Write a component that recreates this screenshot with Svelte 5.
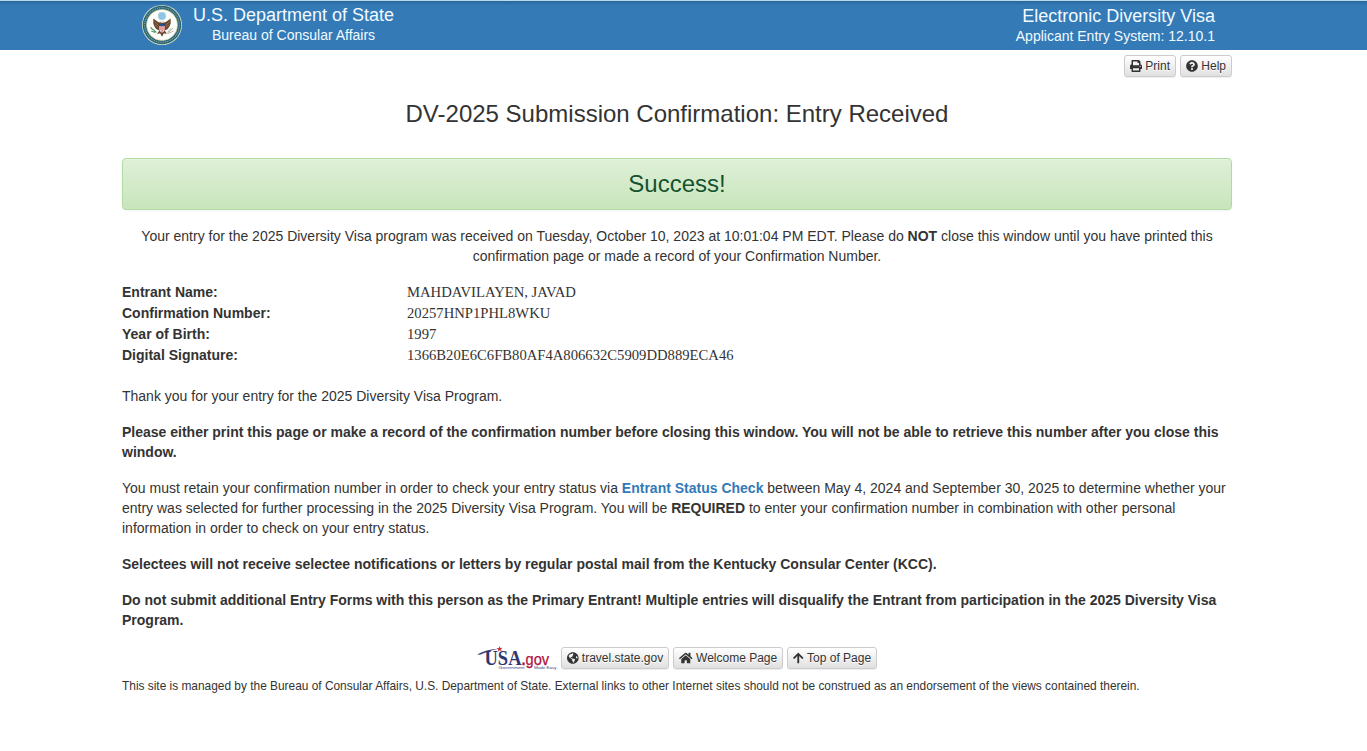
<script>
  const icons = {
    print: { w: 512, d: 'M448 192V77.25c0-8.49-3.37-16.62-9.37-22.63L393.37 9.37c-6-6-14.14-9.37-22.63-9.37H96C78.33 0 64 14.33 64 32v160c-35.35 0-64 28.65-64 64v112c0 8.84 7.16 16 16 16h48v96c0 17.67 14.33 32 32 32h320c17.67 0 32-14.33 32-32v-96h48c8.84 0 16-7.16 16-16V256c0-35.35-28.65-64-64-64zm-64 256H128v-96h256v96zm0-224H128V64h192v48c0 8.84 7.16 16 16 16h48v96zm48 72c-13.25 0-24-10.75-24-24 0-13.26 10.75-24 24-24s24 10.74 24 24c0 13.25-10.75 24-24 24z' },
    help: { w: 512, d: 'M504 256c0 136.997-111.043 248-248 248S8 392.997 8 256C8 119.083 119.043 8 256 8s248 111.083 248 248zM262.655 90c-54.497 0-89.255 22.957-116.549 63.758-3.536 5.286-2.353 12.415 2.715 16.258l34.699 26.31c5.205 3.947 12.621 3.008 16.665-2.122 17.864-22.658 30.113-35.797 57.303-35.797 20.429 0 45.698 13.148 45.698 32.958 0 14.976-12.363 22.667-32.534 33.976C247.128 238.528 216 254.941 216 296v4c0 6.627 5.373 12 12 12h56c6.627 0 12-5.373 12-12v-1.333c0-28.462 83.186-29.647 83.186-106.667 0-58.002-60.165-102-116.531-102zM256 338c-25.365 0-46 20.635-46 46 0 25.364 20.635 46 46 46s46-20.636 46-46c0-25.365-20.635-46-46-46z' },
    globe: { w: 496, d: 'M248 8C111.03 8 0 119.03 0 256s111.03 248 248 248 248-111.03 248-248S384.97 8 248 8zm82.29 357.6c-3.9 3.88-7.99 7.95-11.31 11.28-2.99 3-5.1 6.7-6.17 10.71-1.51 5.66-2.73 11.38-4.77 16.87l-17.39 46.85c-13.76 3-28 4.69-42.65 4.69v-27.38c1.69-12.62-7.64-36.26-22.63-51.25-6-6-9.37-14.14-9.37-22.63v-32.01c0-11.64-6.27-22.34-16.46-27.97-14.37-7.95-34.81-19.06-48.81-26.11-11.48-5.78-22.1-13.14-31.65-21.75l-.8-.72a114.792 114.792 0 0 1-18.06-20.74c-9.38-13.77-24.66-36.42-34.59-51.14 20.47-45.5 57.36-82.04 103.2-101.89l24.01 12.01C203.48 89.74 216 82.01 216 70.11v-11.3c7.99-1.29 16.12-2.11 24.39-2.42l28.3 28.3c6.25 6.25 6.25 16.38 0 22.63L264 112l-10.34 10.34c-3.12 3.12-3.12 8.19 0 11.31l4.69 4.69c3.12 3.12 3.12 8.19 0 11.31l-8 8a8.008 8.008 0 0 1-5.66 2.34h-8.99c-2.08 0-4.08.81-5.58 2.27l-9.92 9.65a8.008 8.008 0 0 0-1.58 9.31l15.59 31.19c2.66 5.32-1.21 11.58-7.15 11.58h-5.64c-1.93 0-3.79-.7-5.24-1.96l-9.28-8.06a16.017 16.017 0 0 0-15.55-3.1l-31.17 10.39a11.95 11.95 0 0 0-8.17 11.34c0 4.53 2.56 8.66 6.61 10.69l11.08 5.54c9.41 4.71 19.79 7.16 30.31 7.16s22.59 27.29 32 32h66.75c8.49 0 16.62 3.37 22.63 9.37l13.69 13.69a30.503 30.503 0 0 1 8.93 21.57 46.536 46.536 0 0 1-13.72 32.98zM417 274.25c-5.79-1.45-10.84-5-14.15-9.97l-17.98-26.97a23.97 23.97 0 0 1 0-26.62l19.59-29.38c2.32-3.47 5.5-6.29 9.24-8.15l12.98-6.49C440.2 193.59 448 223.87 448 256c0 8.67-.74 17.16-1.82 25.54L417 274.25z' },
    home: { w: 576, d: 'M280.37 148.26L96 300.11V464a16 16 0 0 0 16 16l112.06-.29a16 16 0 0 0 15.92-16V368a16 16 0 0 1 16-16h64a16 16 0 0 1 16 16v95.64a16 16 0 0 0 16 16.05L464 480a16 16 0 0 0 16-16V300L295.67 148.26a12.19 12.19 0 0 0-15.3 0zM571.6 251.47L488 182.56V44.05a12 12 0 0 0-12-12h-56a12 12 0 0 0-12 12v72.61L318.47 43a48 48 0 0 0-61 0L4.34 251.47a12 12 0 0 0-1.6 16.9l25.5 31A12 12 0 0 0 45.15 301l235.22-193.74a12.19 12.19 0 0 1 15.3 0L530.9 301a12 12 0 0 0 16.9-1.6l25.5-31a12 12 0 0 0-1.7-16.93z' },
    up: { w: 448, d: 'M34.9 289.5l-22.2-22.2c-9.4-9.4-9.4-24.6 0-33.9L207 39c9.4-9.4 24.6-9.4 33.9 0l194.3 194.3c9.4 9.4 9.4 24.6 0 33.9L413 289.4c-9.5 9.5-25 9.3-34.3-.4L264 168.6V456c0 13.3-10.7 24-24 24h-32c-13.3 0-24-10.7-24-24V168.6L69.2 289.1c-9.3 9.8-24.8 10-34.3.4z' }
  };
  const entry = [
    ['Entrant Name:', 'MAHDAVILAYEN, JAVAD'],
    ['Confirmation Number:', '20257HNP1PHL8WKU'],
    ['Year of Birth:', '1997'],
    ['Digital Signature:', '1366B20E6C6FB80AF4A806632C5909DD889ECA46']
  ];
</script>

{#snippet button(name, label)}
  <button class="btn">
    <svg class="icon" viewBox="0 0 {icons[name].w} 512" width={icons[name].w * 12 / 512} height="12"><path d={icons[name].d} /></svg>
    <span>{label}</span>
  </button>
{/snippet}

<header>
  <div class="bar">
    <div class="brand">
      <svg class="seal" viewBox="0 0 40 40" width="40" height="40">
        <circle cx="20" cy="20" r="20" fill="#d5dfc0" />
        <circle cx="20" cy="20" r="19.2" fill="#2a6478" />
        <circle cx="20" cy="20" r="17.3" fill="none" stroke="#8fae9f" stroke-width="1.2" stroke-dasharray=".9 1" />
        <circle cx="20" cy="20" r="15.5" fill="#fefefb" stroke="#c9c78f" stroke-width=".6" />
        <circle cx="20" cy="11" r="3.9" fill="#8cc4e5" stroke="#b9d8dc" stroke-width=".8" />
        <path d="M18.2 17.6c-1.8-.2-4.3-1.6-6.6-4-1 4.300 .2 8.300 3 10.600l2.700 1.300-2.300 3.500 3.100-.7 1.900 3.500 1.900-3.500 3.100.7-2.300-3.500 2.700-1.300c2.800-2.300 4-6.300 3-10.600-2.300 2.400-4.800 3.800-6.600 4l-.3-1.600-2.800-.1z" fill="#68452f" />
        <path d="M12.600 16.500l3.600 4M13 19.800l3 2.400M27.400 16.500l-3.600 4M27 19.800l-3 2.400" stroke="#a97c45" stroke-width=".8" />
        <path d="M18 16.700l1.400-1.500 2 .3.500 2.300h-3z" fill="#f2edda" />
        <path d="M17 19h6v4.700c0 2-1.500 3.200-3 4-1.500-.8-3-2-3-4z" fill="#f6e8e2" />
        <path d="M18 21v4.400M20 21v6.400M22 21v4.400" stroke="#c5444a" stroke-width=".9" />
        <path d="M17 18.700h6v2.400h-6z" fill="#274f88" />
        <path d="M8.500 22.500c1 .2 1.300 1.700 2.700 2.200s1.400 2 3.300 2.600M9.300 26l3.600 1.400" fill="none" stroke="#5a9d70" stroke-width="1.300" />
        <path d="M25.500 28l5.700-4.800M26 28.500l5.500-2.400M25.500 27.500l3.700-4.500" stroke="#9b9997" stroke-width=".7" />
      </svg>
      <div class="agency"><div class="big">U.S. Department of State</div><div>Bureau of Consular Affairs</div></div>
    </div>
    <div class="system"><div class="big">Electronic Diversity Visa</div><div>Applicant Entry System: 12.10.1</div></div>
  </div>
</header>

<main>
  <div class="tools">{@render button('print', 'Print')}{@render button('help', 'Help')}</div>
  <h1>DV-2025 Submission Confirmation: Entry Received</h1>
  <div class="success">Success!</div>
  <p class="center">Your entry for the 2025 Diversity Visa program was received on Tuesday, October 10, 2023 at 10:01:04 PM EDT. Please do <b>NOT</b> close this window until you have printed this confirmation page or made a record of your Confirmation Number.</p>
  <dl>
    {#each entry as [label, value]}
      <dt>{label}</dt><dd>{value}</dd>
    {/each}
  </dl>
  <p>Thank you for your entry for the 2025 Diversity Visa Program.</p>
  <p><b>Please either print this page or make a record of the confirmation number before closing this window. You will not be able to retrieve this number after you close this window.</b></p>
  <p>You must retain your confirmation number in order to check your entry status via <a href="#status">Entrant Status Check</a> between May 4, 2024 and September 30, 2025 to determine whether your entry was selected for further processing in the 2025 Diversity Visa Program. You will be <b>REQUIRED</b> to enter your confirmation number in combination with other personal information in order to check on your entry status.</p>
  <p><b>Selectees will not receive selectee notifications or letters by regular postal mail from the Kentucky Consular Center (KCC).</b></p>
  <p><b>Do not submit additional Entry Forms with this person as the Primary Entrant! Multiple entries will disqualify the Entrant from participation in the 2025 Diversity Visa Program.</b></p>
  <footer>
    <div class="links">
      <svg class="usa" viewBox="0 0 80 24" width="80" height="24">
        <path d="M0 8.500C7 4.800 14 3 21.500 2.700 14 4.400 9 6 3.200 8.700z" fill="#44477f" />
        <path d="M22.600.1l.7 1.800 2.300-.2-1.700 1.500.9 2-2.100-1-1.900 1.400.5-2.200-1.800-1.200 2.300-.2z" fill="#c92f43" />
        <text x="7.500" y="18.800" textLength="37" lengthAdjust="spacingAndGlyphs" class="usa-name">USA</text>
        <text x="44.500" y="18.800" textLength="27.500" lengthAdjust="spacingAndGlyphs" class="gov"><tspan class="dot">.</tspan>gov</text>
        <text x="21.500" y="23" textLength="26" lengthAdjust="spacingAndGlyphs" class="tagline">Government</text>
        <text x="57" y="23" textLength="22.500" lengthAdjust="spacingAndGlyphs" class="tagline">Made Easy</text>
      </svg>
      {@render button('globe', 'travel.state.gov')}{@render button('home', 'Welcome Page')}{@render button('up', 'Top of Page')}
    </div>
    <div class="notice">This site is managed by the Bureau of Consular Affairs, U.S. Department of State. External links to other Internet sites should not be construed as an endorsement of the views contained therein.</div>
  </footer>
</main>

<style>
  :global(body) { margin: 0; background: #fff; color: #333; font: 14px/20px "Liberation Sans", Arial, sans-serif; }
  header { box-sizing: border-box; height: 50px; background: linear-gradient(#2b669a 0, #337ab7 4px); border-top: 1px solid #b9d9ec; color: #f2faff; }
  .bar { width: 1073px; margin-left: 142px; display: flex; justify-content: space-between; }
  .brand { display: flex; gap: 11px; }
  .seal { display: block; margin-top: 4px; }
  .agency { text-align: center; padding-top: 4px; }
  .system { text-align: right; padding-top: 5px; }
  .big { font-size: 18px; }
  main { width: 1110px; margin-left: 122px; padding-top: 5px; }
  .tools { display: flex; justify-content: flex-end; gap: 4px; }
  .btn { box-sizing: border-box; display: flex; align-items: center; gap: 3.33px; height: 22px; padding: 1px 5px; border: 1px solid #ccc; border-radius: 3px; background: linear-gradient(#fff, #e0e0e0); color: #333; font: 12px/18px "Liberation Sans", Arial, sans-serif; text-shadow: 0 1px 0 #fff; box-shadow: inset 0 1px 0 rgba(255,255,255,.15), 0 1px 1px rgba(0,0,0,.075); white-space: nowrap; }
  .icon { display: block; fill: #333; flex: none; }
  h1 { margin: 24px 0 31px; font-size: 24px; line-height: 26px; font-weight: 400; text-align: center; }
  .success { box-sizing: border-box; height: 52px; margin-bottom: 16px; border: 1px solid #b2dba1; border-radius: 4px; background: linear-gradient(#dff0d8, #c8e5bc); color: #14532d; font-size: 24px; line-height: 50px; text-align: center; text-shadow: 0 1px 0 rgba(255,255,255,.2); box-shadow: inset 0 1px 0 rgba(255,255,255,.25), 0 1px 2px rgba(0,0,0,.05); }
  p { margin: 0 0 16px; }
  .center { text-align: center; }
  dl { display: grid; grid-template-columns: 285px 1fr; grid-auto-rows: 21px; margin: 0 0 20px; }
  dt { font-weight: 700; }
  dd { margin: 0; font: 14.667px/21px "Liberation Serif", "Times New Roman", serif; }
  a { color: #337ab7; font-weight: 700; text-decoration: none; }
  .links { display: flex; justify-content: center; align-items: center; gap: 4px; height: 24px; }
  .usa { display: block; }
  .usa-name { font: 700 21px "Liberation Serif", serif; fill: #30366f; }
  .gov { font: 16px "Liberation Sans", sans-serif; fill: #b0133f; stroke: #b0133f; stroke-width: .25px; }
  .dot { font-weight: 700; }
  .tagline { font: 4.300px "Liberation Sans", sans-serif; fill: #3c4380; }
  .notice { margin-top: 6px; font-size: 11.9px; line-height: 20px; }
</style>
